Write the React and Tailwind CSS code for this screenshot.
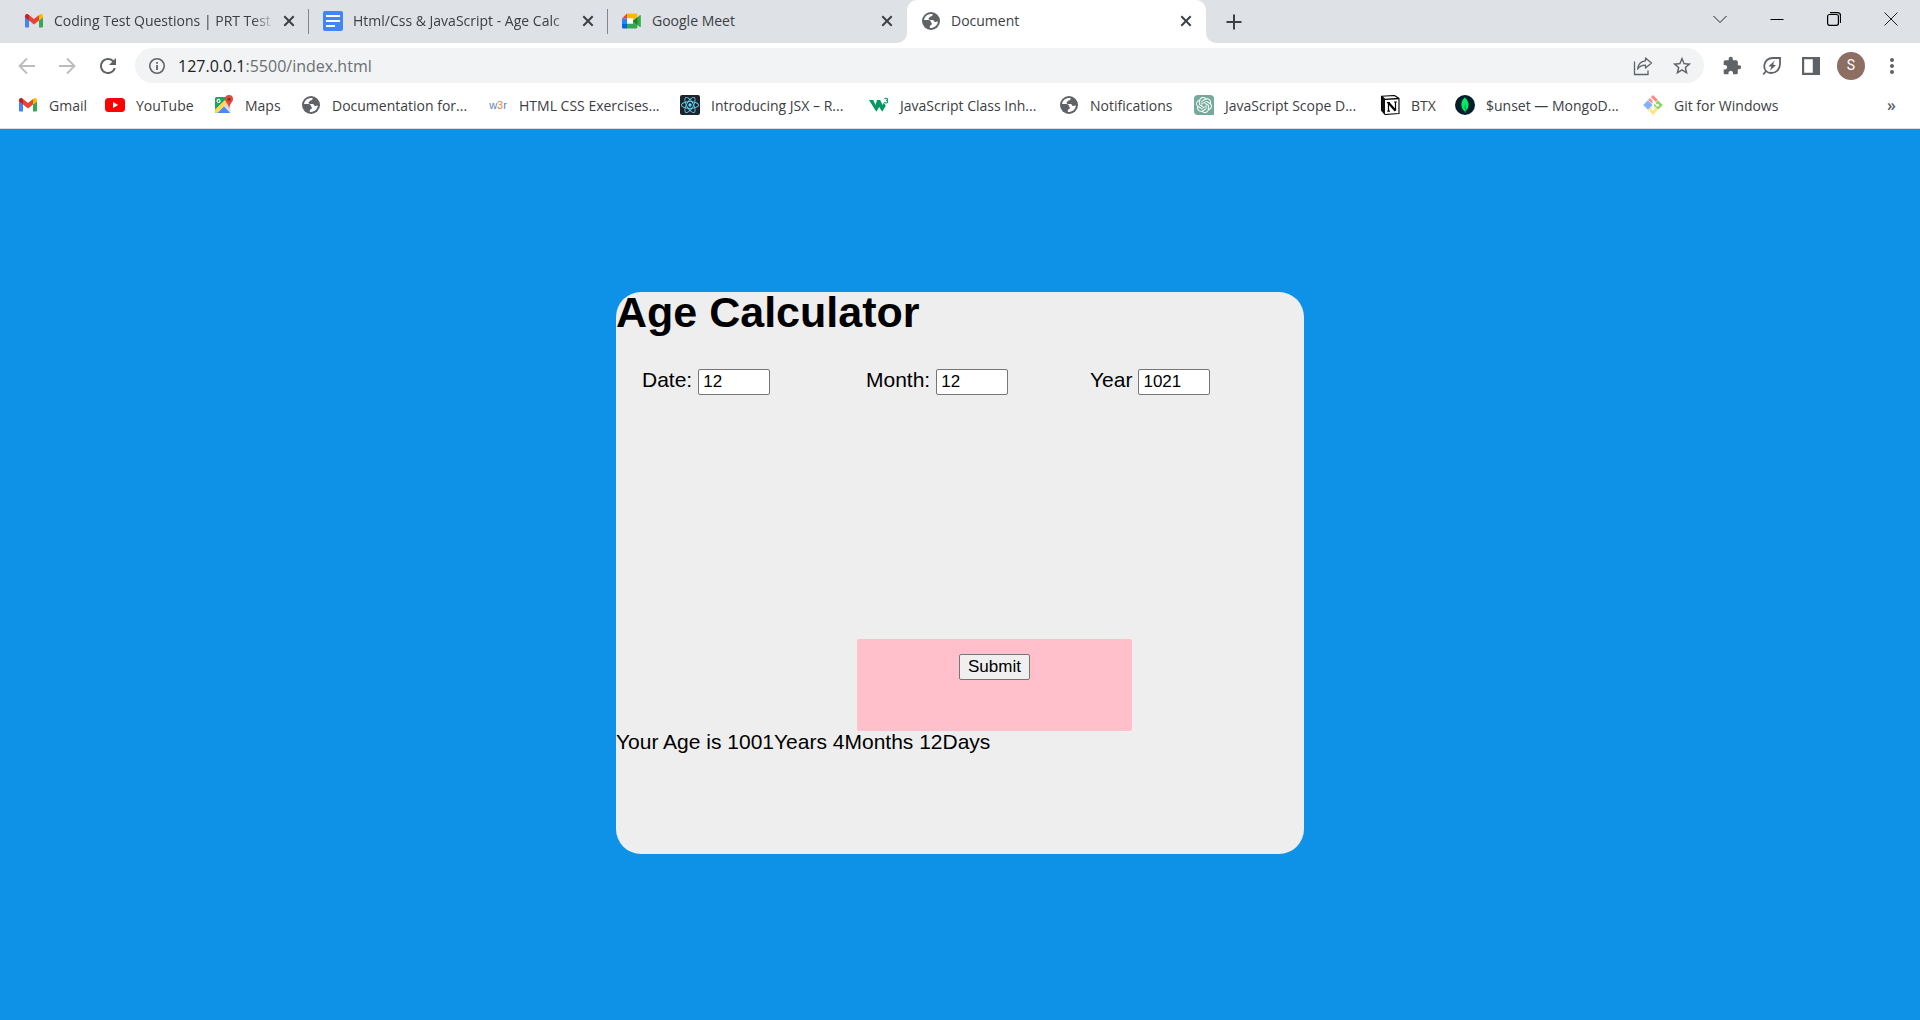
import React from "react";
import { MdExtension, MdStarBorder, MdRefresh, MdMoreVert } from "react-icons/md";
import { SiOpenai, SiReact, SiMongodb } from "react-icons/si";

function GmailIcon() {
  return (
    <svg viewBox="0 0 20 16" className="h-4 w-5" aria-hidden="true">
      <path d="M1 4v9.6c0 .6.5 1 1 1h3V7.2L1 4z" fill="#4285f4" />
      <path d="M15 7.2v7.4h3c.6 0 1-.4 1-1V4l-4 3.2z" fill="#34a853" />
      <path d="M15 2.600v4.900L19 4.400V3c0-1.900-2-2.700-3.300-1.600L15 2z" fill="#fbbc04" />
      <path d="M5 7.500V2l5 3.900L15 2v5.500l-5 3.900-5-3.900z" fill="#ea4335" />
      <path d="M1 3v1.400l4 3.100V2l-.7-.6C3 .3 1 1.100 1 3z" fill="#c5221f" />
    </svg>
  );
}

function DocsIcon() {
  return (
    <svg viewBox="0 0 20 20" className="size-5" aria-hidden="true">
      <rect width="20" height="20" rx="2" fill="#4285f4" />
      <path d="M3 4h14v2H3zM3 9h14v2H3zM3 14h9v2H3z" fill="#fff" />
    </svg>
  );
}

function MeetIcon() {
  return (
    <svg viewBox="0 0 20 20" className="size-5" aria-hidden="true">
      <path d="M5 2.500v5H0z" fill="#ea4335" />
      <path d="M0 7.500h5v5.500H0z" fill="#2684fc" />
      <path d="M0 13h5v4.500H1.500C.6 17.500 0 17 0 16z" fill="#0066da" />
      <path d="M5 2.500h9c.8 0 1.400.6 1.400 1.400v3.600L11 11V7.500H5z" fill="#ffba00" />
      <path d="M5 7.500h6v5.200H5z" fill="#fff" />
      <path d="M5 12.700h6V9l4.400 1v6c0 .9-.6 1.500-1.400 1.500H5z" fill="#34a853" />
      <path d="M11 10l6.800-5.800c.4-.3 1 0 1 .5v10.700c0 .5-.6.8-1 .5z" fill="#34a853" />
      <path d="M11 10l4.400-3.700v7.400z" fill="#188038" />
    </svg>
  );
}

function GlobeIcon() {
  return (
    <svg viewBox="0 0 20 20" className="size-5" aria-hidden="true">
      <circle cx="10" cy="10" r="9" fill="#5f6368" />
      <path
        d="M11.500 3.100C11.900 4.700 11 5.400 9.600 5.500 8.400 5.700 8.700 6.900 7.700 7.300c-.6.500.1 1.600 1.200 1.700h2.800c1.300.1 1.200 1.900 2.500 2 1 .1 1.600-.5 2.700-.4-.3 3.500-3.200 6.300-6.800 6.400l-1.300-.1v-1.500c.1-1.300 2-1 2.100-2.300.1-1.200-.8-1.300-1-2.400-.2-1.400-2-1.600-3.500-1.600H3.100C3.300 5.600 6.500 2.800 11.500 3.100z"
        fill="#fff"
      />
    </svg>
  );
}

function YouTubeIcon() {
  return (
    <svg viewBox="0 0 20 20" className="size-5" aria-hidden="true">
      <rect y="3" width="20" height="14" rx="3.500" fill="#f00" />
      <path d="M8 7l5.200 3L8 13z" fill="#fff" />
    </svg>
  );
}

function MapsIcon() {
  return (
    <svg viewBox="0 0 20 20" className="size-5" aria-hidden="true">
      <path d="M2.500 2h12v16h-12A1.500 1.500 0 011 16.500v-13A1.500 1.500 0 012.500 2z" fill="#1fa463" />
      <path d="M1.400 17.600L16.500 3v13.500a1.500 1.500 0 01-1.500 1.500z" fill="#dcdcdc" />
      <path d="M1 14.500L13.500 2.500l2 3L2.800 18A1.700 1.700 0 011 16.300z" fill="#ffd94c" />
      <path d="M3.500 18L10 11.600l6.200 6.400z" fill="#4a89f3" />
      <path d="M6.700 5.600H5v.9h.8c-.2.600-.6.800-1 .8a1.200 1.200 0 01.1-2.400c.3 0 .6.100.8.300l.6-.6a2.100 2.100 0 10.4 1z" fill="#fff" />
      <path d="M15 0a4 4 0 00-4 4c0 3.300 3 4.200 3.600 8.200.1.500.7.500.8 0C16 8.200 19 7.300 19 4a4 4 0 00-4-4z" fill="#dd4b3e" />
      <circle cx="15" cy="4.200" r="1.500" fill="#8c2a20" />
    </svg>
  );
}

function W3rIcon() {
  return (
    <span className="flex w-5 items-center justify-center font-['Liberation_Sans'] text-[11px] text-[#5a82c0]" aria-hidden="true">
      w<b className="font-normal text-[#f08040]">3</b>r
    </span>
  );
}

function ReactIcon() {
  return (
    <span className="flex size-5 items-center justify-center rounded-xs bg-[#20232a]">
      <SiReact className="size-[18px] text-[#61dafb]" />
    </span>
  );
}

function W3SchoolsIcon() {
  return (
    <svg viewBox="0 0 20 20" className="size-5" aria-hidden="true">
      <path d="M0 5h4.200l2.300 5L8 5h3.200l2.300 5 1.300-2.200 2 2.900-3.600 6-3-4.800-2.900 4.800z" fill="#059862" />
      <path d="M15.600 4.200c.3-1.300 3-1.200 2.900.2 0 .9-.8 1-1.500 1 1 0 1.800.3 1.800 1.300 0 1.700-3 1.700-3.300.2" fill="none" stroke="#059862" strokeWidth="1.100" />
    </svg>
  );
}

function ChatIcon() {
  return (
    <span className="flex size-5 items-center justify-center rounded-tl-sm rounded-tr-sm rounded-bl-sm bg-[#74a99b]">
      <SiOpenai className="size-4 text-white" />
    </span>
  );
}

function NotionIcon() {
  return (
    <svg viewBox="0 0 20 20" className="size-5" aria-hidden="true">
      <path d="M1.500 1.300L14.500.5 19 3.500v15L5 19.500 1.500 15.500z" fill="#fff" stroke="#000" strokeWidth="1.100" strokeLinejoin="round" />
      <path d="M1.500 1.300L5 4.400v15.100l-3.500-4z" fill="#111" />
      <path d="M1.500 1.300L5 4.400 19 3.500" fill="none" stroke="#000" strokeWidth="1.300" />
      <path d="M7 7.700h2.800M8.500 7.700v8.500M7.300 16.200h2.700M14 7h2.800M15.500 7v8.500" stroke="#000" strokeWidth="1.200" />
      <path d="M8.500 7.700l7 8" stroke="#000" strokeWidth="2.200" />
    </svg>
  );
}

function MongoIcon() {
  return (
    <span className="flex size-5 items-center justify-center rounded-full bg-[#001e2b]">
      <SiMongodb className="size-4 text-[#00ed64]" />
    </span>
  );
}

function GitIcon() {
  return (
    <svg viewBox="0 0 20 20" className="size-5" aria-hidden="true">
      <path d="M10 0l4.800 4.800-4.800 4.800-4.800-4.800z" fill="#f88a85" />
      <path d="M5 5.200L9.700 10 5 14.800.2 10z" fill="#80b3ff" />
      <path d="M15 5.200l4.800 4.800-4.800 4.800-4.700-4.800z" fill="#8cd860" />
      <path d="M10 10.400l4.800 4.800L10 20l-4.800-4.800z" fill="#ffe680" />
      <path d="M7 2.200l5.500 5.300M10 5.500v9M10 7l4.500 3.500" stroke="#fff" strokeWidth="1.300" />
      <circle cx="10" cy="14" r="1.400" fill="#fff" />
      <circle cx="14.500" cy="10.300" r="1.400" fill="#fff" />
    </svg>
  );
}

function Arrow({ flip }) {
  return (
    <svg viewBox="0 0 20 20" className={flip ? "size-5 rotate-180" : "size-5"} fill="none" stroke="#babcbe" strokeWidth="1.800" aria-hidden="true">
      <path d="M18 10H3M10 2.500L2.500 10l7.500 7.500" />
    </svg>
  );
}

function InfoIcon() {
  return (
    <svg viewBox="0 0 18 18" className="size-[18px]" aria-hidden="true">
      <circle cx="9" cy="9" r="7.200" fill="none" stroke="#5f6368" strokeWidth="1.600" />
      <path d="M8.100 8h1.800v5H8.100zM8.100 5h1.800v1.800H8.100z" fill="#5f6368" />
    </svg>
  );
}

function ShareIcon() {
  return (
    <svg viewBox="0 0 20 20" className="size-5" fill="none" stroke="#5f6368" strokeWidth="1.300" aria-hidden="true">
      <path d="M1.500 5.500v13H15v-4" />
      <path d="M12.500 2l6 5-6 5V9.200c-3.500 0-6 1-7.800 4 .4-4.500 3-8 7.800-8.400z" strokeLinejoin="round" />
    </svg>
  );
}

function LeafIcon() {
  return (
    <svg viewBox="0 0 20 20" className="size-5" fill="none" stroke="#5f6368" strokeWidth="1.800" aria-hidden="true">
      <path d="M18 2h-7C6 2 2.200 5.300 2.200 10c0 4.300 3 7 6.800 7 5 0 9-3.500 9-9z" />
      <path d="M4.500 14.500L1.200 18.500" />
      <path d="M12.800 4.500L6.500 10.200l3 .6-1.600 4L14 9.200l-3-.6z" fill="#5f6368" stroke="none" />
    </svg>
  );
}

function SidePanelIcon() {
  return (
    <svg viewBox="0 0 18 18" className="size-[18px]" aria-hidden="true">
      <path d="M0 0h18v18H0zM2.200 2.200v13.600h8.600V2.200z" fill="#5f6368" fillRule="evenodd" />
    </svg>
  );
}

function CloseIcon() {
  return (
    <svg viewBox="0 0 12 12" className="size-3" stroke="#3c4043" strokeWidth="2" aria-hidden="true">
      <path d="M1.300 1.300l9.400 9.400M10.700 1.300l-9.400 9.400" />
    </svg>
  );
}

const tabs = [
  { title: "Coding Test Questions | PRT Test", icon: GmailIcon, fade: true, divider: true },
  { title: "Html/Css & JavaScript - Age Calc", icon: DocsIcon, fade: true, divider: true },
  { title: "Google Meet", icon: MeetIcon },
  { title: "Document", icon: GlobeIcon, active: true },
];

const bookmarks = [
  { label: "Gmail", icon: GmailIcon, width: "w-[87px]" },
  { label: "YouTube", icon: YouTubeIcon, width: "w-[109px]" },
  { label: "Maps", icon: MapsIcon, width: "w-[87px]" },
  { label: "Documentation for...", icon: GlobeIcon, width: "w-[187px]" },
  { label: "HTML CSS Exercises...", icon: W3rIcon, width: "w-[192px]" },
  { label: "Introducing JSX – R...", icon: ReactIcon, width: "w-[189px]" },
  { label: "JavaScript Class Inh...", icon: W3SchoolsIcon, width: "w-[190px]" },
  { label: "Notifications", icon: GlobeIcon, width: "w-[135px]" },
  { label: "JavaScript Scope D...", icon: ChatIcon, width: "w-[186px]" },
  { label: "BTX", icon: NotionIcon, width: "w-[75px]" },
  { label: "$unset — MongoD...", icon: MongoIcon, width: "w-[188px]" },
  { label: "Git for Windows", icon: GitIcon, width: "w-[140px]" },
];

function Tab({ title, icon: Icon, fade, divider, active }) {
  return (
    <div
      className={
        active
          ? "relative flex h-full w-[299px] items-center rounded-t-[10px] bg-white px-[14px] pb-[2px]"
          : "relative flex h-full w-[299px] items-center px-[14px] pb-[2px]"
      }
    >
      {active && (
        <>
          <span className="absolute bottom-0 -left-[10px] size-[10px] bg-white">
            <span className="block size-full rounded-br-[10px] bg-[#dee1e6]" />
          </span>
          <span className="absolute -right-[10px] bottom-0 size-[10px] bg-white">
            <span className="block size-full rounded-bl-[10px] bg-[#dee1e6]" />
          </span>
        </>
      )}
      <Icon />
      <button
        className={
          fade
            ? "ml-[10px] flex-1 mask-r-from-90% text-left whitespace-nowrap"
            : "ml-[10px] flex-1 text-left whitespace-nowrap"
        }
      >
        {title}
      </button>
      <button aria-label={"Close " + title} className="ml-2">
        <CloseIcon />
      </button>
      {divider && <span className="absolute top-[9px] right-0 h-[25px] w-px bg-[#80868b]" />}
    </div>
  );
}

function TabStrip() {
  return (
    <div className="flex h-[43px] items-center bg-[#dee1e6] pl-[10px] text-[14px] text-[#3c4043]">
      {tabs.map((t) => (
        <Tab key={t.title} {...t} />
      ))}
      <button aria-label="New tab" className="ml-5">
        <svg viewBox="0 0 16 16" className="size-4" stroke="#3c4043" strokeWidth="2" aria-hidden="true">
          <path d="M8 .5v15M.5 8h15" />
        </svg>
      </button>
      <div className="mr-px ml-auto flex h-full items-center pb-[6px] text-[#202124]">
        <button aria-label="Search tabs" className="flex w-[57px] justify-center">
          <svg viewBox="0 0 14 14" className="size-[14px]" fill="none" stroke="currentColor" aria-hidden="true">
            <path d="M.5 4L7 10.500 13.500 4" />
          </svg>
        </button>
        <button aria-label="Minimize" className="flex w-[57px] justify-center">
          <svg viewBox="0 0 14 14" className="size-[14px]" fill="none" stroke="#000" aria-hidden="true">
            <path d="M.5 7.500h13" />
          </svg>
        </button>
        <button aria-label="Restore" className="flex w-[57px] justify-center">
          <svg viewBox="0 0 14 14" className="size-[14px]" fill="none" stroke="#000" strokeWidth="1.200" aria-hidden="true">
            <rect x=".6" y="2.500" width="10.800" height="10.800" rx="2" />
            <path d="M3 .7h7.500a3 3 0 013 3V11" />
          </svg>
        </button>
        <button aria-label="Close window" className="flex w-[57px] justify-center">
          <svg viewBox="0 0 14 14" className="size-[14px]" fill="none" stroke="currentColor" aria-hidden="true">
            <path d="M.5.5l13 13M13.500.5l-13 13" />
          </svg>
        </button>
      </div>
    </div>
  );
}

function Toolbar() {
  return (
    <div className="flex h-[45px] items-center pr-[16px] pl-[17px]">
      <div className="flex items-center gap-5">
        <button aria-label="Back"><Arrow /></button>
        <button aria-label="Forward"><Arrow flip /></button>
        <button aria-label="Reload" className="-ml-px"><MdRefresh className="size-6 text-[#5f6368]" /></button>
      </div>
      <div className="ml-[15px] flex h-[35px] flex-1 items-center rounded-full bg-[#f1f3f4] pr-[11px] pl-[13px]">
        <InfoIcon />
        <div contentEditable suppressContentEditableWarning role="textbox" aria-label="Address" className="ml-[12px] flex-1 text-[16px] text-[#6b6f73] outline-none">
          <span className="text-[#202124]">127.0.0.1</span>:5500/index.html
        </div>
        <button aria-label="Share" className="mr-[18px]"><ShareIcon /></button>
        <button aria-label="Bookmark"><MdStarBorder className="size-[22px] text-[#5f6368]" /></button>
      </div>
      <div className="ml-[18px] flex items-center gap-5 text-[#5f6368]">
        <button aria-label="Extensions"><MdExtension className="size-5" /></button>
        <button aria-label="Energy saver"><LeafIcon /></button>
        <button aria-label="Side panel"><SidePanelIcon /></button>
        <button aria-label="Profile" className="-mr-1 -ml-[3px] size-7 rounded-full bg-[#8d6e63] font-[Roboto] text-[14px] text-white">S</button>
        <button aria-label="Menu" className="-ml-px"><MdMoreVert className="size-6" /></button>
      </div>
    </div>
  );
}

function BookmarkBar() {
  return (
    <nav className="flex h-[41px] items-center border-b border-[#dadce0] pb-[6px] pl-[18px] text-[14px] text-[#3c4043]">
      {bookmarks.map(({ label, icon: Icon, width }) => (
        <a key={label} href="#" className={"flex items-center gap-[11px] whitespace-nowrap " + width}>
          <Icon />
          {label}
        </a>
      ))}
      <button aria-label="More bookmarks" className="mr-6 ml-auto font-['Open_Sans'] text-[16px] font-semibold text-[#5f6368]">»</button>
    </nav>
  );
}

function Field({ id, label, value }) {
  return (
    <div className="flex w-[224px] shrink-0 items-baseline gap-[6px]">
      <label htmlFor={id}>{label}</label>
      <input
        id={id}
        type="text"
        defaultValue={value}
        className="h-[26px] w-[72px] rounded-xs border border-[#767676] bg-white px-1 text-[17px] leading-[20px]"
      />
    </div>
  );
}

export default function App() {
  return (
    <div className="flex min-h-screen flex-col bg-[#0d92e8]">
      <header className="bg-white font-['Open_Sans',sans-serif]">
        <TabStrip />
        <Toolbar />
        <BookmarkBar />
      </header>
      <main className="flex flex-1 items-center justify-center pb-[3px] font-['Liberation_Sans',Arial,sans-serif] text-[21px] leading-[21px] text-black">
        <form className="flex min-h-[562px] w-full max-w-[688px] flex-col rounded-[25px] bg-[#eee]" onSubmit={(e) => e.preventDefault()}>
          <h1 className="text-[43px] leading-[41px] font-bold">Age Calculator</h1>
          <div className="mt-[36px] flex pl-[26px]">
            <Field id="date" label="Date:" value="12" />
            <Field id="month" label="Month:" value="12" />
            <Field id="year" label="Year" value="1021" />
          </div>
          <div className="mt-[244px] ml-[241px] flex h-[92px] w-[275px] items-start justify-center rounded-xs bg-[#ffc0cb] pt-[15px]">
            <button type="submit" className="h-[26px] w-[71px] rounded-xs border border-[#767676] bg-[#efefef] pb-[2px] text-[17px]">Submit</button>
          </div>
          <p>Your Age is 1001Years 4Months 12Days</p>
        </form>
      </main>
    </div>
  );
}
